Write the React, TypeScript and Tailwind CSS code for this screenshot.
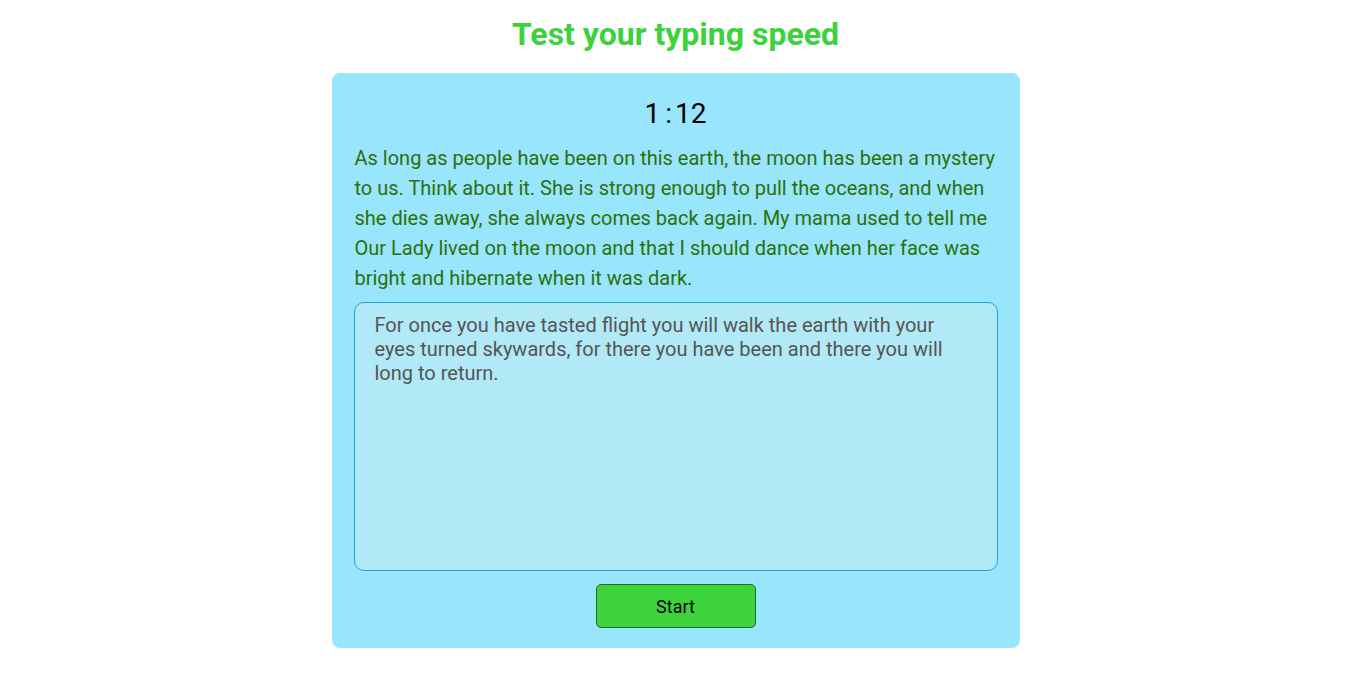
import React from "react";

const passage =
  "As long as people have been on this earth, the moon has been a mystery to us. Think about it. She is strong enough to pull the oceans, and when she dies away, she always comes back again. My mama used to tell me Our Lady lived on the moon and that I should dance when her face was bright and hibernate when it was dark.";

const typed =
  "For once you have tasted flight you will walk the earth with your eyes turned skywards, for there you have been and there you will long to return.";

export default function App() {
  return (
    <div className="min-h-screen bg-white font-['Roboto',sans-serif] flex flex-col items-center">
      {/* Heading */}
      <h1 className="mt-[14px] text-[32px] leading-[40px] font-bold text-[#3bd23b]">
        Test your typing speed
      </h1>

      {/* Card */}
      <div className="mt-[19px] w-[688px] rounded-[8px] bg-[#98e5fc] px-[22px] pt-[24px] pb-[20px] flex flex-col items-center">
        <div className="text-[28px] leading-[34px] text-black">
          1<span className="ml-[5px] mr-[3px]">:</span>12
        </div>

        <p className="mt-[12px] w-full pl-[1px] text-[20px] leading-[30px] text-[#2c700b]">
          {passage}
        </p>

        <textarea
          className="mt-[9px] w-full h-[269px] resize-none rounded-[10px] border border-[#1ea6d6] bg-[#b1e9f6] px-[20px] py-[10px] text-[20px] leading-[24px] text-[#555555] outline-none font-['Roboto',sans-serif]"
          defaultValue={typed}
        />

        <button className="mt-[13px] w-[160px] h-[44px] rounded-[5px] border border-[#1f6e1f] bg-[#3cd33c] text-[18px] text-black">
          Start
        </button>
      </div>
    </div>
  );
}
